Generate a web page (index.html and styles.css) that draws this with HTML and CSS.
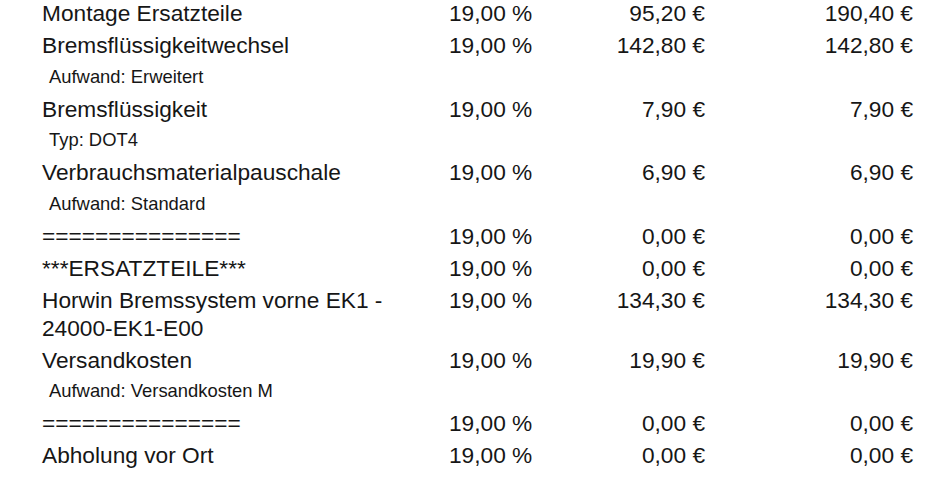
FILE: index.html
```html
<!DOCTYPE html>
<html lang="de">
<head>
<meta charset="utf-8">
<title>Rechnung Positionen</title>
<link rel="stylesheet" href="styles.css">
</head>
<body>
<div class="items">
  <div class="row"><div class="desc">Montage Ersatzteile</div><div class="vat">19,00 %</div><div class="num">95,20 €</div><div class="num">190,40 €</div></div>
  <div class="row"><div class="desc">Bremsflüssigkeitwechsel</div><div class="vat">19,00 %</div><div class="num">142,80 €</div><div class="num">142,80 €</div></div>
  <div class="row sub"><div class="desc">Aufwand: Erweitert</div></div>
  <div class="row"><div class="desc">Bremsflüssigkeit</div><div class="vat">19,00 %</div><div class="num">7,90 €</div><div class="num">7,90 €</div></div>
  <div class="row sub"><div class="desc">Typ: DOT4</div></div>
  <div class="row"><div class="desc">Verbrauchsmaterialpauschale</div><div class="vat">19,00 %</div><div class="num">6,90 €</div><div class="num">6,90 €</div></div>
  <div class="row sub"><div class="desc">Aufwand: Standard</div></div>
  <div class="row"><div class="desc">===============</div><div class="vat">19,00 %</div><div class="num">0,00 €</div><div class="num">0,00 €</div></div>
  <div class="row"><div class="desc">***ERSATZTEILE***</div><div class="vat">19,00 %</div><div class="num">0,00 €</div><div class="num">0,00 €</div></div>
  <div class="row"><div class="desc">Horwin Bremssystem vorne EK1 - 24000-EK1-E00</div><div class="vat">19,00 %</div><div class="num">134,30 €</div><div class="num">134,30 €</div></div>
  <div class="row"><div class="desc">Versandkosten</div><div class="vat">19,00 %</div><div class="num">19,90 €</div><div class="num">19,90 €</div></div>
  <div class="row sub"><div class="desc">Aufwand: Versandkosten M</div></div>
  <div class="row"><div class="desc">===============</div><div class="vat">19,00 %</div><div class="num">0,00 €</div><div class="num">0,00 €</div></div>
  <div class="row"><div class="desc">Abholung vor Ort</div><div class="vat">19,00 %</div><div class="num">0,00 €</div><div class="num">0,00 €</div></div>
</div>
</body>
</html>
```
FILE: styles.css
```css
html, body {
  margin: 0;
  padding: 0;
  background: #ffffff;
}
body {
  font-family: "Liberation Sans", Arial, sans-serif;
  color: #161616;
  overflow: hidden;
}
.items {
  margin-top: -3px;
  padding-left: 42px;
}
.row {
  display: grid;
  grid-template-columns: 407px 120px 136px 208px;
  font-size: 22.7px;
  line-height: 28px;
  padding: 2px 0;
}
.desc {
  overflow-wrap: break-word;
}
.vat {
  text-align: left;
}
.num {
  text-align: right;
}
.row.sub {
  font-size: 18.4px;
  padding: 1.75px 0;
}
.row.sub .desc {
  padding-left: 7px;
}
```
